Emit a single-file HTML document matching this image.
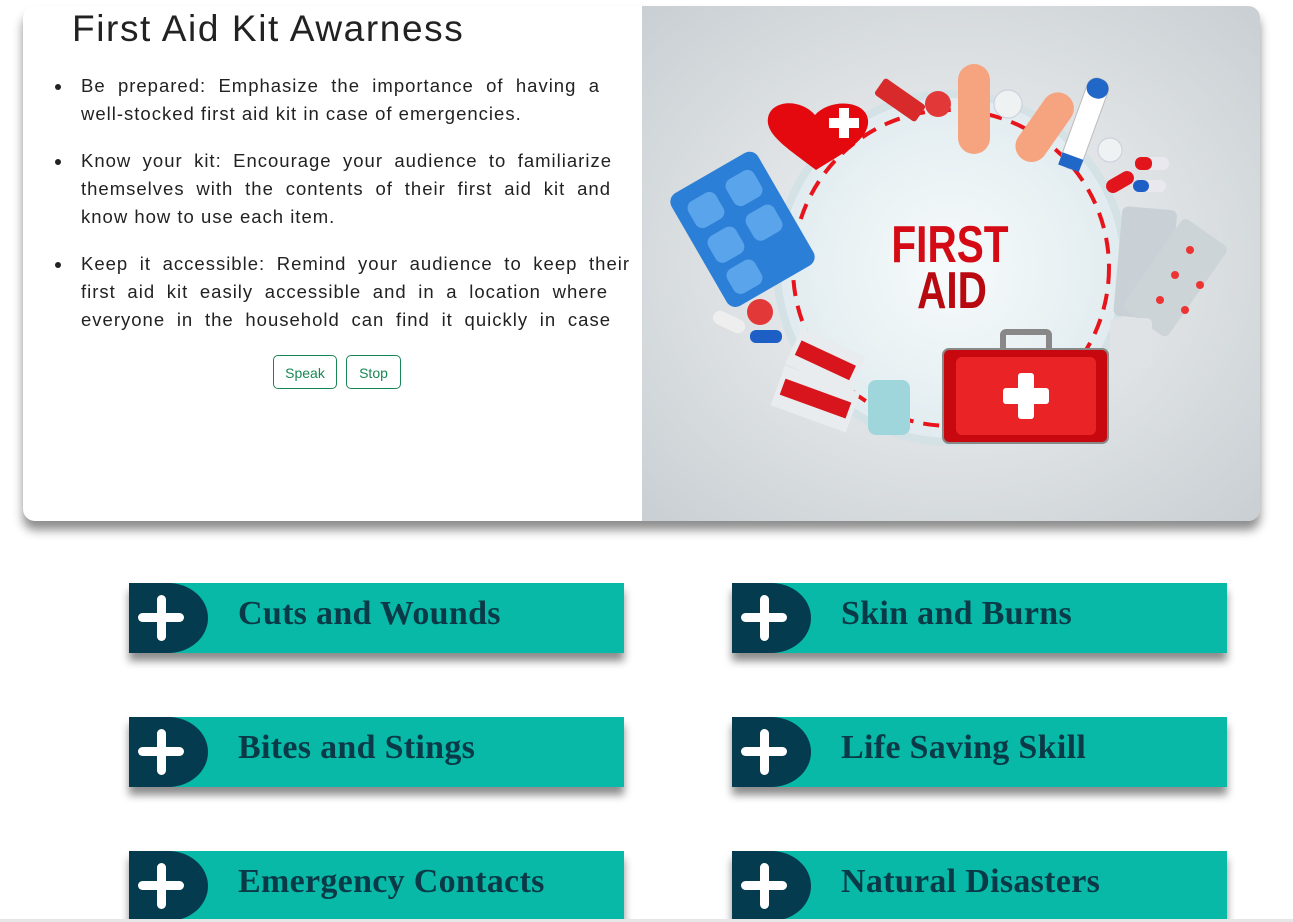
<!DOCTYPE html>
<html><head><meta charset="utf-8"><style>
html,body{margin:0;padding:0;background:#fff;width:1293px;height:922px;overflow:hidden;position:relative;font-family:"Liberation Sans",sans-serif}
.card{position:absolute;left:23px;top:6px;width:1237px;height:515px;border-radius:12px;background:#fff;box-shadow:0 9px 10px rgba(0,0,0,.45);overflow:hidden}
h1{position:absolute;left:49px;top:2px;margin:0;font-weight:400;font-size:37px;color:#222;letter-spacing:1.6px}
.txt{position:absolute;left:58px;top:66px;font-size:18.5px;line-height:28px;color:#222;letter-spacing:1px}
.l{text-align:justify;text-align-last:justify;white-space:nowrap;height:28px}
.l.e{text-align-last:left}
.blk{position:relative;margin-bottom:19px}
.blk:before{content:"";position:absolute;left:-26px;top:12px;width:6px;height:6px;border-radius:50%;background:#222}
.btn{position:absolute;top:349px;height:34px;border:1px solid #198754;border-radius:5px;color:#198754;font-size:14px;line-height:34px;text-align:center;box-sizing:border-box}
.img{position:absolute;left:619px;top:0}
.tile{position:absolute;width:495px;height:70px;background:#07b9a6;box-shadow:0 8px 8px rgba(0,0,0,.45)}
.cap{position:absolute;left:0;top:0;width:79px;height:70px;background:#043b4f;border-radius:0 40px 40px 0/0 35px 35px 0}
.cap:before{content:"";position:absolute;left:9px;top:30px;width:46px;height:9px;background:#fff;border-radius:5px}
.cap:after{content:"";position:absolute;left:28px;top:12px;width:9px;height:46px;background:#fff;border-radius:5px}
.tile span{position:absolute;left:109px;top:12px;font-family:"Liberation Serif",serif;font-weight:700;font-size:34px;color:#0a3a48;white-space:nowrap;letter-spacing:.3px}
.bar{position:absolute;left:0;top:919px;width:1293px;height:3px;background:#e6e6e6}
</style></head><body>
<div class="card">
<h1>First Aid Kit Awarness</h1>
<div class="txt">
<div class="blk"><div class="l" style="width:519px">Be prepared: Emphasize the importance of having a</div><div class="l e">well-stocked first aid kit in case of emergencies.</div></div>
<div class="blk"><div class="l" style="width:531px">Know your kit: Encourage your audience to familiarize</div><div class="l" style="width:530px">themselves with the contents of their first aid kit and</div><div class="l e">know how to use each item.</div></div>
<div class="blk"><div class="l" style="width:549px">Keep it accessible: Remind your audience to keep their</div><div class="l" style="width:527px">first aid kit easily accessible and in a location where</div><div class="l" style="width:530px">everyone in the household can find it quickly in case</div></div>
</div>
<div class="btn" style="left:250px;width:64px">Speak</div>
<div class="btn" style="left:323px;width:55px">Stop</div>
<svg class="img" width="618" height="515" viewBox="642 6 618 515">
<defs><radialGradient id="bg" cx="50%" cy="50%" r="70%"><stop offset="0" stop-color="#f4f6f7"/><stop offset="1" stop-color="#c9cfd3"/></radialGradient>
<radialGradient id="cg" cx="50%" cy="50%" r="60%"><stop offset="0" stop-color="#f7fbfc"/><stop offset="1" stop-color="#dde9ed"/></radialGradient></defs>
<rect x="642" y="6" width="618" height="515" fill="url(#bg)"/>
<circle cx="951" cy="268" r="178" fill="#d4e2e6"/>
<circle cx="951" cy="268" r="170" fill="url(#cg)"/>
<circle cx="951" cy="268" r="158" fill="none" stroke="#e8141c" stroke-width="4" stroke-dasharray="16 10"/>
<text x="950" y="262" text-anchor="middle" font-family="Liberation Sans Narrow,Liberation Sans,sans-serif" font-weight="700" font-size="52" fill="#d40a14" transform="translate(950 0) scale(.78 1) translate(-950 0)">FIRST</text>
<text x="952" y="308" text-anchor="middle" font-family="Liberation Sans Narrow,Liberation Sans,sans-serif" font-weight="700" font-size="52" fill="#b80810" transform="translate(952 0) scale(.78 1) translate(-952 0)">AID</text>
<g transform="rotate(-30 740 225)"><rect x="690" y="165" width="100" height="130" rx="10" fill="#2c7fd6"/>
<rect x="702" y="180" width="32" height="30" rx="8" fill="#5aa4ec"/><rect x="746" y="180" width="32" height="30" rx="8" fill="#5aa4ec"/>
<rect x="702" y="220" width="32" height="30" rx="8" fill="#5aa4ec"/><rect x="746" y="220" width="32" height="30" rx="8" fill="#5aa4ec"/>
<rect x="702" y="258" width="32" height="28" rx="8" fill="#5aa4ec"/></g>
<path d="M816 170 C790 150 765 135 768 118 C771 100 800 98 815 115 C830 98 866 100 868 120 C870 140 840 155 816 170Z" fill="#e3090f"/>
<rect x="829" y="118" width="30" height="10" fill="#fff"/><rect x="839" y="108" width="10" height="30" fill="#fff"/>
<g transform="rotate(35 900 100)"><rect x="875" y="90" width="50" height="20" rx="3" fill="#d82a2a"/></g>
<circle cx="938" cy="104" r="13" fill="#e23838"/>
<rect x="958" y="64" width="32" height="90" rx="16" fill="#f6a47f"/>
<circle cx="1008" cy="104" r="14" fill="#eef2f3" stroke="#ccd" />
<g transform="rotate(35 1045 125)"><rect x="1030" y="88" width="32" height="78" rx="16" fill="#f6a47f"/></g>
<g transform="rotate(20 1085 120)"><rect x="1075" y="76" width="22" height="95" rx="10" fill="#fff" stroke="#bbb"/><rect x="1075" y="76" width="22" height="20" rx="10" fill="#2167c7"/><rect x="1075" y="158" width="22" height="13" fill="#2167c7"/></g>
<circle cx="1110" cy="150" r="12" fill="#eef2f3" stroke="#ccd"/>
<rect x="1135" y="157" width="34" height="13" rx="6" fill="#e8e8ee"/><rect x="1135" y="157" width="17" height="13" rx="6" fill="#e2141c"/>
<rect x="1133" y="180" width="33" height="12" rx="6" fill="#e8e8ee"/><rect x="1133" y="180" width="16" height="12" rx="6" fill="#1e5fc6"/>
<rect x="1105" y="175" width="30" height="14" rx="7" fill="#e2141c" transform="rotate(-30 1120 182)"/>
<rect x="1118" y="208" width="55" height="110" rx="6" fill="#c9d1d6" transform="rotate(5 1145 260)"/>
<rect x="1150" y="225" width="55" height="110" rx="6" fill="#ccd4d8" transform="rotate(35 1180 275)"/>
<circle cx="1190" cy="250" r="4" fill="#e33"/><circle cx="1175" cy="275" r="4" fill="#e33"/><circle cx="1200" cy="285" r="4" fill="#e33"/><circle cx="1160" cy="300" r="4" fill="#e33"/><circle cx="1185" cy="310" r="4" fill="#e33"/>
<rect x="1110" y="318" width="42" height="50" rx="5" fill="#dfe3e6"/>
<circle cx="760" cy="312" r="13" fill="#e23838"/>
<rect x="712" y="315" width="34" height="14" rx="7" fill="#eee" transform="rotate(25 729 322)"/><rect x="750" y="330" width="32" height="13" rx="6" fill="#1e5fc6"/>
<g transform="rotate(25 820 360)"><rect x="790" y="338" width="70" height="40" fill="#e9ecee"/><rect x="795" y="350" width="60" height="16" fill="#d8141c"/></g>
<g transform="rotate(20 815 400)"><rect x="775" y="378" width="80" height="42" fill="#e9ecee"/><rect x="780" y="390" width="70" height="17" fill="#d8141c"/></g>
<rect x="868" y="380" width="42" height="55" rx="8" fill="#9fd6db"/>
<rect x="1003" y="332" width="46" height="22" rx="3" fill="none" stroke="#888" stroke-width="6"/>
<rect x="943" y="349" width="165" height="94" rx="6" fill="#c7080e" stroke="#888" stroke-width="2"/>
<rect x="956" y="357" width="140" height="78" rx="6" fill="#ea2326"/>
<rect x="1003" y="388" width="46" height="16" rx="3" fill="#fff"/><rect x="1018" y="373" width="16" height="46" rx="3" fill="#fff"/>
</svg>
</div>
<div class="tile" style="left:129px;top:583px"><div class="cap"></div><span>Cuts and Wounds</span></div>
<div class="tile" style="left:732px;top:583px"><div class="cap"></div><span>Skin and Burns</span></div>
<div class="tile" style="left:129px;top:717px"><div class="cap"></div><span>Bites and Stings</span></div>
<div class="tile" style="left:732px;top:717px"><div class="cap"></div><span>Life Saving Skill</span></div>
<div class="tile" style="left:129px;top:851px"><div class="cap"></div><span>Emergency Contacts</span></div>
<div class="tile" style="left:732px;top:851px"><div class="cap"></div><span>Natural Disasters</span></div>
<div class="bar"></div>
</body></html>
